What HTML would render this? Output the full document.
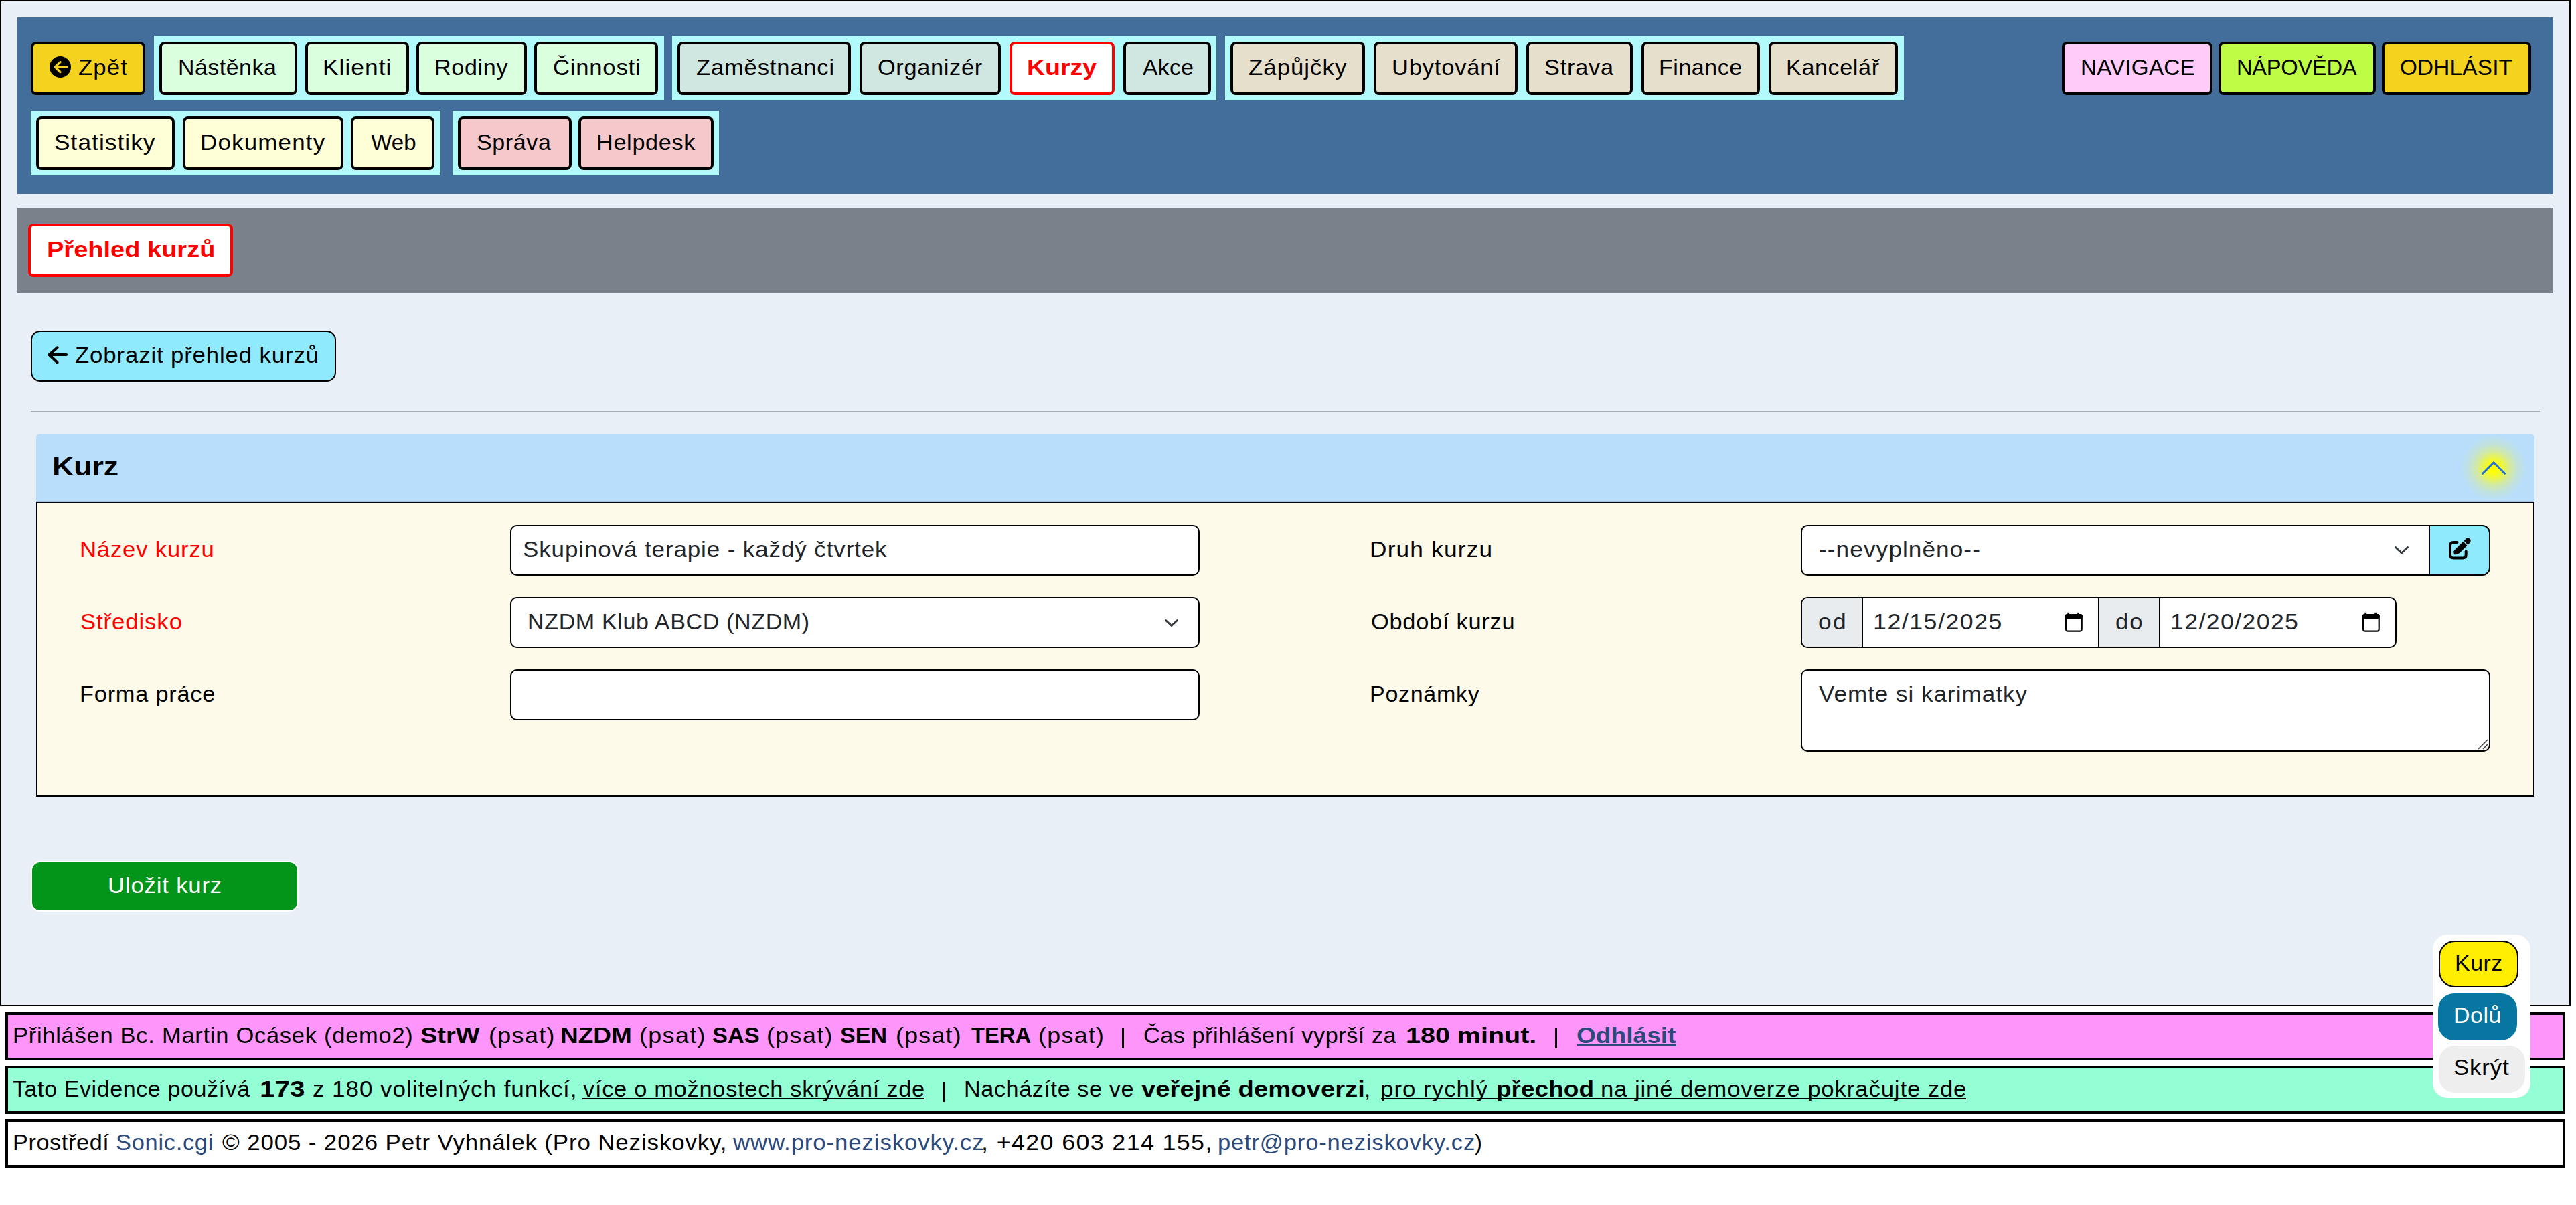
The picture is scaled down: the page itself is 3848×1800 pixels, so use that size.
<!DOCTYPE html>
<html><head><meta charset="utf-8"><title>Kurz</title>
<style>
html,body{margin:0;padding:0}
body{width:3848px;height:1800px;position:relative;overflow:hidden;background:#fff;font-family:"Liberation Sans",sans-serif}
.a{position:absolute;box-sizing:border-box}
.t{position:absolute;line-height:0;white-space:pre;font-family:"Liberation Sans",sans-serif}
@media (max-width:2600px){html{zoom:0.5}}
</style></head><body>
<div class="a" style="left:0px;top:0px;width:3840px;height:1503px;border:2px solid #000;background:#e8eff7"></div>
<div class="a" style="left:26px;top:26px;width:3788px;height:264px;background:#436e9b"></div>
<div class="a" style="left:230px;top:54px;width:762px;height:96px;background:#b2f9fc"></div>
<div class="a" style="left:1004px;top:54px;width:813px;height:96px;background:#b2f9fc"></div>
<div class="a" style="left:1830px;top:54px;width:1014px;height:96px;background:#b2f9fc"></div>
<div class="a" style="left:46px;top:166px;width:612px;height:96px;background:#b2f9fc"></div>
<div class="a" style="left:676px;top:166px;width:398px;height:96px;background:#b2f9fc"></div>
<div class="a" style="left:46px;top:62px;width:171px;height:80px;border:4px solid #000;border-radius:8px;background:#f4d31f"></div>
<div class="t" style="left:117.3px;top:101px;font-size:33px;letter-spacing:1.077px;color:#000;transform:scaleX(1.0523);transform-origin:0 0;">Zpět</div>
<div class="a" style="left:238px;top:62px;width:206px;height:80px;border:4px solid #000;border-radius:8px;background:#d9ffde"></div>
<div class="t" style="left:265.8px;top:101px;font-size:33px;letter-spacing:0.508px;color:#000;transform:scaleX(1.0266);transform-origin:0 0;">Nástěnka</div>
<div class="a" style="left:456px;top:62px;width:155px;height:80px;border:4px solid #000;border-radius:8px;background:#d9ffde"></div>
<div class="t" style="left:482.0px;top:101px;font-size:33px;letter-spacing:0.941px;color:#000;transform:scaleX(1.0712);transform-origin:0 0;">Klienti</div>
<div class="a" style="left:622px;top:62px;width:165px;height:80px;border:4px solid #000;border-radius:8px;background:#d9ffde"></div>
<div class="t" style="left:649.1px;top:101px;font-size:33px;letter-spacing:0.639px;color:#000;transform:scaleX(1.0333);transform-origin:0 0;">Rodiny</div>
<div class="a" style="left:798px;top:62px;width:185px;height:80px;border:4px solid #000;border-radius:8px;background:#d9ffde"></div>
<div class="t" style="left:825.9px;top:101px;font-size:33px;letter-spacing:0.763px;color:#000;transform:scaleX(1.0487);transform-origin:0 0;">Činnosti</div>
<div class="a" style="left:1012px;top:62px;width:259px;height:80px;border:4px solid #000;border-radius:8px;background:#cfe6e1"></div>
<div class="t" style="left:1039.5px;top:101px;font-size:33px;letter-spacing:0.817px;color:#000;transform:scaleX(1.0460);transform-origin:0 0;">Zaměstnanci</div>
<div class="a" style="left:1284px;top:62px;width:211px;height:80px;border:4px solid #000;border-radius:8px;background:#cfe6e1"></div>
<div class="t" style="left:1311.3px;top:101px;font-size:33px;letter-spacing:0.674px;color:#000;transform:scaleX(1.0389);transform-origin:0 0;">Organizér</div>
<div class="a" style="left:1508px;top:62px;width:157px;height:80px;border:4px solid #000;border-radius:8px;background:#ffffff;border-color:#ff0000"></div>
<div class="t" style="left:1534.3px;top:101px;font-size:33px;letter-spacing:-0.000px;color:#ff0000;font-weight:700;transform:scaleX(1.1348);transform-origin:0 0;">Kurzy</div>
<div class="a" style="left:1678px;top:62px;width:131px;height:80px;border:4px solid #000;border-radius:8px;background:#cfe6e1"></div>
<div class="t" style="left:1706.7px;top:101px;font-size:33px;letter-spacing:0.410px;color:#000;transform:scaleX(1.0174);transform-origin:0 0;">Akce</div>
<div class="a" style="left:1838px;top:62px;width:201px;height:80px;border:4px solid #000;border-radius:8px;background:#e6dfcb"></div>
<div class="t" style="left:1865.1px;top:101px;font-size:33px;letter-spacing:0.962px;color:#000;transform:scaleX(1.0542);transform-origin:0 0;">Zápůjčky</div>
<div class="a" style="left:2052px;top:62px;width:215px;height:80px;border:4px solid #000;border-radius:8px;background:#e6dfcb"></div>
<div class="t" style="left:2078.5px;top:101px;font-size:33px;letter-spacing:0.789px;color:#000;transform:scaleX(1.0452);transform-origin:0 0;">Ubytování</div>
<div class="a" style="left:2280px;top:62px;width:159px;height:80px;border:4px solid #000;border-radius:8px;background:#e6dfcb"></div>
<div class="t" style="left:2306.9px;top:101px;font-size:33px;letter-spacing:0.730px;color:#000;transform:scaleX(1.0404);transform-origin:0 0;">Strava</div>
<div class="a" style="left:2452px;top:62px;width:177px;height:80px;border:4px solid #000;border-radius:8px;background:#e6dfcb"></div>
<div class="t" style="left:2477.9px;top:101px;font-size:33px;letter-spacing:0.542px;color:#000;transform:scaleX(1.0296);transform-origin:0 0;">Finance</div>
<div class="a" style="left:2642px;top:62px;width:193px;height:80px;border:4px solid #000;border-radius:8px;background:#e6dfcb"></div>
<div class="t" style="left:2668.0px;top:101px;font-size:33px;letter-spacing:0.601px;color:#000;transform:scaleX(1.0340);transform-origin:0 0;">Kancelář</div>
<div class="a" style="left:3080px;top:62px;width:225px;height:80px;border:4px solid #000;border-radius:8px;background:#ffcbf9"></div>
<div class="t" style="left:3108.2px;top:101px;font-size:33px;letter-spacing:0.177px;color:#000;transform:scaleX(1.0076);transform-origin:0 0;">NAVIGACE</div>
<div class="a" style="left:3314px;top:62px;width:235px;height:80px;border:4px solid #000;border-radius:8px;background:#befc45"></div>
<div class="t" style="left:3341.1px;top:101px;font-size:33px;letter-spacing:-0.267px;color:#000;transform:scaleX(0.9897);transform-origin:0 0;">NÁPOVĚDA</div>
<div class="a" style="left:3558px;top:62px;width:223px;height:80px;border:4px solid #000;border-radius:8px;background:#f4d31f"></div>
<div class="t" style="left:3585.4px;top:101px;font-size:33px;letter-spacing:0.205px;color:#000;transform:scaleX(1.0088);transform-origin:0 0;">ODHLÁSIT</div>
<div class="a" style="left:54px;top:174px;width:207px;height:80px;border:4px solid #000;border-radius:8px;background:#ffffd7"></div>
<div class="t" style="left:81.4px;top:213px;font-size:33px;letter-spacing:0.950px;color:#000;transform:scaleX(1.0704);transform-origin:0 0;">Statistiky</div>
<div class="a" style="left:273px;top:174px;width:240px;height:80px;border:4px solid #000;border-radius:8px;background:#ffffd7"></div>
<div class="t" style="left:298.8px;top:213px;font-size:33px;letter-spacing:1.122px;color:#000;transform:scaleX(1.0583);transform-origin:0 0;">Dokumenty</div>
<div class="a" style="left:524px;top:174px;width:125px;height:80px;border:4px solid #000;border-radius:8px;background:#ffffd7"></div>
<div class="t" style="left:554.3px;top:213px;font-size:33px;letter-spacing:0.000px;color:#000;">Web</div>
<div class="a" style="left:684px;top:174px;width:170px;height:80px;border:4px solid #000;border-radius:8px;background:#f5c9cb"></div>
<div class="t" style="left:712.0px;top:213px;font-size:33px;letter-spacing:0.611px;color:#000;transform:scaleX(1.0306);transform-origin:0 0;">Správa</div>
<div class="a" style="left:864px;top:174px;width:202px;height:80px;border:4px solid #000;border-radius:8px;background:#f5c9cb"></div>
<div class="t" style="left:891.4px;top:213px;font-size:33px;letter-spacing:0.669px;color:#000;transform:scaleX(1.0362);transform-origin:0 0;">Helpdesk</div>
<svg class="a" style="left:72px;top:82px" width="36" height="36" viewBox="0 0 36 36"><circle cx="18" cy="18" r="16" fill="#000"/><path d="M18 10.6 L10.4 18 L18 25.6 M10.6 18 H27.6" stroke="#f4d31f" stroke-width="3.4" fill="none" stroke-linecap="round" stroke-linejoin="round"/></svg>
<div class="a" style="left:26px;top:310px;width:3788px;height:128px;background:#7b818b"></div>
<div class="a" style="left:42px;top:334px;width:306px;height:80px;background:#fff;border:4px solid #ff0000;border-radius:8px"></div>
<div class="t" style="left:70.2px;top:373px;font-size:33px;letter-spacing:0.000px;color:#ff0000;font-weight:700;transform:scaleX(1.1519);transform-origin:0 0;">Přehled kurzů</div>
<div class="a" style="left:46px;top:494px;width:456px;height:76px;background:#8feafd;border:2px solid #000;border-radius:14px"></div>
<svg class="a" style="left:68px;top:514px" width="36" height="32" viewBox="0 0 36 32"><path d="M17.5 5.5 L5.5 16 L17.5 27.5 M6 16 H31" stroke="#000" stroke-width="4.2" fill="none" stroke-linecap="round" stroke-linejoin="round"/></svg>
<div class="t" style="left:111.9px;top:531px;font-size:33px;letter-spacing:0.801px;color:#000;transform:scaleX(1.0546);transform-origin:0 0;">Zobrazit přehled kurzů</div>
<div class="a" style="left:46px;top:614px;width:3748px;height:2px;background:#a7adb5"></div>
<div class="a" style="left:54px;top:648px;width:3732px;height:104px;background:#b9defc;border-radius:6px 6px 0 0"></div>
<div class="a" style="left:54px;top:748px;width:3732px;height:2px;background:#a3c4e4"></div>
<div class="a" style="left:54px;top:750px;width:3732px;height:440px;background:#fefae9;border:2px solid #000"></div>
<div class="t" style="left:77.7px;top:697px;font-size:39px;letter-spacing:0.000px;color:#000;font-weight:700;transform:scaleX(1.1422);transform-origin:0 0;">Kurz</div>
<div class="a" style="left:3665px;top:639px;width:120px;height:120px;background:radial-gradient(circle at 60px 60px, rgba(255,255,0,1) 0px, rgba(255,255,0,1) 6px, rgba(255,255,0,0.72) 15px, rgba(255,255,0,0.36) 25px, rgba(255,255,0,0.12) 37px, rgba(255,255,0,0) 50px)"></div>
<svg class="a" style="left:3700px;top:680px" width="50" height="36" viewBox="0 0 50 36"><path d="M8.6 27.3 L25.1 10.75 L41.7 27.3" stroke="#1a6fe0" stroke-width="3" fill="none" stroke-linecap="round" stroke-linejoin="miter"/></svg>
<div class="t" style="left:118.7px;top:821px;font-size:33px;letter-spacing:0.820px;color:#ff0000;transform:scaleX(1.0483);transform-origin:0 0;">Název kurzu</div>
<div class="t" style="left:119.7px;top:929px;font-size:33px;letter-spacing:0.843px;color:#ff0000;transform:scaleX(1.0530);transform-origin:0 0;">Středisko</div>
<div class="t" style="left:118.7px;top:1037px;font-size:33px;letter-spacing:0.730px;color:#000;transform:scaleX(1.0415);transform-origin:0 0;">Forma práce</div>
<div class="t" style="left:2046.2px;top:821px;font-size:33px;letter-spacing:1.108px;color:#000;transform:scaleX(1.0683);transform-origin:0 0;">Druh kurzu</div>
<div class="t" style="left:2048.4px;top:929px;font-size:33px;letter-spacing:0.711px;color:#000;transform:scaleX(1.0418);transform-origin:0 0;">Období kurzu</div>
<div class="t" style="left:2046.3px;top:1037px;font-size:33px;letter-spacing:0.665px;color:#000;transform:scaleX(1.0318);transform-origin:0 0;">Poznámky</div>
<div class="a" style="left:762px;top:784px;width:1030px;height:76px;background:#fff;border:2px solid #000;border-radius:10px"></div>
<div class="t" style="left:780.5px;top:821px;font-size:33px;letter-spacing:0.847px;color:#212529;transform:scaleX(1.0593);transform-origin:0 0;">Skupinová terapie - každý čtvrtek</div>
<div class="a" style="left:762px;top:892px;width:1030px;height:76px;background:#fff;border:2px solid #000;border-radius:10px"></div>
<div class="t" style="left:787.6px;top:929px;font-size:33px;letter-spacing:0.606px;color:#212529;transform:scaleX(1.0320);transform-origin:0 0;">NZDM Klub ABCD (NZDM)</div>
<svg class="a" style="left:1736px;top:920px" width="28" height="20" viewBox="0 0 28 20"><path d="M5.5 6.5 L14 14.5 L22.5 6.5" stroke="#343a40" stroke-width="3" fill="none" stroke-linecap="round" stroke-linejoin="round"/></svg>
<div class="a" style="left:762px;top:1000px;width:1030px;height:76px;background:#fff;border:2px solid #000;border-radius:10px"></div>
<div class="a" style="left:2690px;top:784px;width:941px;height:76px;background:#fff;border:2px solid #000;border-right:none;border-radius:10px 0 0 10px"></div>
<div class="t" style="left:2716.9px;top:821px;font-size:33px;letter-spacing:1.010px;color:#212529;transform:scaleX(1.0664);transform-origin:0 0;">--nevyplněno--</div>
<svg class="a" style="left:3573px;top:811px" width="28" height="20" viewBox="0 0 28 20"><path d="M5.5 6.5 L14.5 15 L23.5 6.5" stroke="#343a40" stroke-width="3" fill="none" stroke-linecap="round" stroke-linejoin="round"/></svg>
<div class="a" style="left:3628px;top:784px;width:92px;height:76px;background:#8feafd;border:2px solid #000;border-radius:0 12px 12px 0"></div>
<svg class="a" style="left:3650px;top:798px" width="48" height="46" viewBox="0 0 48 46"><path d="M20.5 12 H15 Q10 12 10 17 V30.6 Q10 35.6 15 35.6 H28.7 Q33.7 35.6 33.7 30.6 V25.5" stroke="#000" stroke-width="4" fill="none" stroke-linecap="round"/><g transform="translate(16 30.2) rotate(-45)"><path d="M0 0 L2.2 -3.4 Q3.2 -4.2 5.5 -4.2 H23.3 V4.2 H8 Q3.5 4.2 0 0 Z" fill="#000"/><path d="M24.8 -4.2 H29 A4.2 4.2 0 0 1 29 4.2 H24.8 Z" fill="#000"/></g></svg>
<div class="a" style="left:2690px;top:892px;width:890px;height:76px;background:#fff;border:2px solid #000;border-radius:10px"></div>
<div class="a" style="left:2692px;top:894px;width:89px;height:72px;background:#e9ecef;border-radius:8px 0 0 8px"></div>
<div class="a" style="left:2781px;top:894px;width:2px;height:72px;background:#000"></div>
<div class="a" style="left:3134px;top:894px;width:2px;height:72px;background:#000"></div>
<div class="a" style="left:3136px;top:894px;width:89px;height:72px;background:#e9ecef"></div>
<div class="a" style="left:3225px;top:894px;width:2px;height:72px;background:#000"></div>
<div class="t" style="left:2715.6px;top:929px;font-size:33px;letter-spacing:2.237px;color:#212529;transform:scaleX(1.0727);transform-origin:0 0;">od</div>
<div class="t" style="left:2797.8px;top:929px;font-size:33px;letter-spacing:1.385px;color:#212529;transform:scaleX(1.0833);transform-origin:0 0;">12/15/2025</div>
<div class="t" style="left:3159.5px;top:929px;font-size:33px;letter-spacing:1.799px;color:#212529;transform:scaleX(1.0559);transform-origin:0 0;">do</div>
<div class="t" style="left:3241.6px;top:929px;font-size:33px;letter-spacing:1.313px;color:#212529;transform:scaleX(1.0787);transform-origin:0 0;">12/20/2025</div>
<svg class="a" style="left:3085px;top:914px" width="26" height="30" viewBox="0 0 26 30"><rect x="1.1" y="4.1" width="23.6" height="24.6" rx="3" stroke="#000" stroke-width="2.2" fill="none"/><rect x="0" y="3" width="25.8" height="7" rx="3" fill="#000"/><rect x="3.3" y="0.8" width="2.8" height="4" fill="#000"/><rect x="18.2" y="0.8" width="2.8" height="4" fill="#000"/></svg>
<svg class="a" style="left:3529px;top:914px" width="26" height="30" viewBox="0 0 26 30"><rect x="1.1" y="4.1" width="23.6" height="24.6" rx="3" stroke="#000" stroke-width="2.2" fill="none"/><rect x="0" y="3" width="25.8" height="7" rx="3" fill="#000"/><rect x="3.3" y="0.8" width="2.8" height="4" fill="#000"/><rect x="18.2" y="0.8" width="2.8" height="4" fill="#000"/></svg>
<div class="a" style="left:2690px;top:1000px;width:1030px;height:123px;background:#fff;border:2px solid #000;border-radius:10px"></div>
<div class="t" style="left:2716.7px;top:1037px;font-size:33px;letter-spacing:0.942px;color:#212529;transform:scaleX(1.0616);transform-origin:0 0;">Vemte si karimatky</div>
<svg class="a" style="left:3700px;top:1103px" width="18" height="18" viewBox="0 0 18 18"><path d="M2 16 L16 2 M9 16 L16 9" stroke="#444" stroke-width="1.6"/></svg>
<div class="a" style="left:46px;top:1286px;width:400px;height:76px;background:#03951a;border:2px solid #fff;border-radius:14px"></div>
<div class="t" style="left:160.9px;top:1323px;font-size:33px;letter-spacing:0.760px;color:#fff;transform:scaleX(1.0530);transform-origin:0 0;">Uložit kurz</div>
<div class="a" style="left:8px;top:1512px;width:3824px;height:72px;background:#fd95fb;border:4px solid #000"></div>
<div class="a" style="left:8px;top:1592px;width:3824px;height:72px;background:#94ffd5;border:4px solid #000"></div>
<div class="a" style="left:8px;top:1672px;width:3824px;height:72px;background:#fff;border:4px solid #000"></div>
<div class="t" style="left:19.4px;top:1547px;font-size:33px;letter-spacing:0.692px;color:#000;transform:scaleX(1.0453);transform-origin:0 0;">Přihlášen Bc. Martin Ocásek (demo2)</div>
<div class="t" style="left:628.1px;top:1547px;font-size:33px;letter-spacing:0.000px;color:#000;font-weight:700;transform:scaleX(1.1513);transform-origin:0 0;">StrW</div>
<div class="t" style="left:729.6px;top:1547px;font-size:33px;letter-spacing:1.262px;color:#000;transform:scaleX(1.0856);transform-origin:0 0;">(psat)</div>
<div class="t" style="left:836.8px;top:1547px;font-size:33px;letter-spacing:0.000px;color:#000;font-weight:700;transform:scaleX(1.1209);transform-origin:0 0;">NZDM</div>
<div class="t" style="left:955.1px;top:1547px;font-size:33px;letter-spacing:1.262px;color:#000;transform:scaleX(1.0856);transform-origin:0 0;">(psat)</div>
<div class="t" style="left:1064.2px;top:1547px;font-size:33px;letter-spacing:0.000px;color:#000;font-weight:700;transform:scaleX(1.0424);transform-origin:0 0;">SAS</div>
<div class="t" style="left:1145.4px;top:1547px;font-size:33px;letter-spacing:1.262px;color:#000;transform:scaleX(1.0856);transform-origin:0 0;">(psat)</div>
<div class="t" style="left:1254.8px;top:1547px;font-size:33px;letter-spacing:0.000px;color:#000;font-weight:700;transform:scaleX(1.0323);transform-origin:0 0;">SEN</div>
<div class="t" style="left:1337.8px;top:1547px;font-size:33px;letter-spacing:1.202px;color:#000;transform:scaleX(1.0813);transform-origin:0 0;">(psat)</div>
<div class="t" style="left:1450.6px;top:1547px;font-size:33px;letter-spacing:0.000px;color:#000;font-weight:700;transform:scaleX(0.9921);transform-origin:0 0;">TERA</div>
<div class="t" style="left:1550.8px;top:1547px;font-size:33px;letter-spacing:1.228px;color:#000;transform:scaleX(1.0831);transform-origin:0 0;">(psat)</div>
<div class="t" style="left:1707.5px;top:1547px;font-size:33px;letter-spacing:0.533px;color:#000;transform:scaleX(1.0362);transform-origin:0 0;">Čas přihlášení vyprší za</div>
<div class="t" style="left:2100.0px;top:1547px;font-size:33px;letter-spacing:0.000px;color:#000;font-weight:700;transform:scaleX(1.1969);transform-origin:0 0;">180 minut.</div>
<div class="a" style="left:1676px;top:1536px;width:3px;height:30px;background:#000"></div>
<div class="a" style="left:2323px;top:1536px;width:3px;height:30px;background:#000"></div>
<div class="t" style="left:2354.9px;top:1547px;font-size:33px;letter-spacing:0.000px;color:#2c4a7c;font-weight:700;transform:scaleX(1.1244);transform-origin:0 0;">Odhlásit</div>
<div class="a" style="left:2356px;top:1560px;width:148px;height:3px;background:#2c4a7c"></div>
<div class="t" style="left:19.4px;top:1627px;font-size:33px;letter-spacing:0.535px;color:#000;transform:scaleX(1.0333);transform-origin:0 0;">Tato Evidence používá</div>
<div class="t" style="left:387.5px;top:1627px;font-size:33px;letter-spacing:-0.000px;color:#000;font-weight:700;transform:scaleX(1.2269);transform-origin:0 0;">173</div>
<div class="t" style="left:466.9px;top:1627px;font-size:33px;letter-spacing:0.860px;color:#000;transform:scaleX(1.0634);transform-origin:0 0;">z 180 volitelných funkcí,</div>
<div class="t" style="left:871.0px;top:1627px;font-size:33px;letter-spacing:0.671px;color:#000;transform:scaleX(1.0434);transform-origin:0 0;">více o možnostech skrývání zde</div>
<div class="t" style="left:1439.6px;top:1627px;font-size:33px;letter-spacing:0.572px;color:#000;transform:scaleX(1.0358);transform-origin:0 0;">Nacházíte se ve</div>
<div class="t" style="left:1704.9px;top:1627px;font-size:33px;letter-spacing:0.000px;color:#000;font-weight:700;transform:scaleX(1.1591);transform-origin:0 0;">veřejné demoverzi</div>
<div class="t" style="left:2061.5px;top:1627px;font-size:33px;letter-spacing:0.896px;color:#000;transform:scaleX(1.0606);transform-origin:0 0;">pro rychlý</div>
<div class="t" style="left:2234.5px;top:1627px;font-size:33px;letter-spacing:0.000px;color:#000;font-weight:700;transform:scaleX(1.1214);transform-origin:0 0;">přechod</div>
<div class="t" style="left:2390.9px;top:1627px;font-size:33px;letter-spacing:0.808px;color:#000;transform:scaleX(1.0539);transform-origin:0 0;">na jiné demoverze pokračujte zde</div>
<div class="t" style="left:2038px;top:1627px;font-size:33px">,</div>
<div class="a" style="left:1408px;top:1616px;width:3px;height:30px;background:#000"></div>
<div class="a" style="left:870px;top:1640px;width:511px;height:2px;background:#000"></div>
<div class="a" style="left:2063px;top:1640px;width:874px;height:2px;background:#000"></div>
<div class="t" style="left:18.6px;top:1707px;font-size:33px;letter-spacing:0.590px;color:#000;transform:scaleX(1.0374);transform-origin:0 0;">Prostředí</div>
<div class="t" style="left:173.2px;top:1707px;font-size:33px;letter-spacing:0.677px;color:#2c4a7c;transform:scaleX(1.0435);transform-origin:0 0;">Sonic.cgi</div>
<div class="t" style="left:331.5px;top:1707px;font-size:33px;letter-spacing:0.837px;color:#000;transform:scaleX(1.0564);transform-origin:0 0;">© 2005 - 2026 Petr Vyhnálek (Pro Neziskovky,</div>
<div class="t" style="left:1095.1px;top:1707px;font-size:33px;letter-spacing:0.852px;color:#2c4a7c;transform:scaleX(1.0533);transform-origin:0 0;">www.pro-neziskovky.cz</div>
<div class="t" style="left:1465.7px;top:1707px;font-size:33px;letter-spacing:1.261px;color:#000;transform:scaleX(1.0856);transform-origin:0 0;">, +420 603 214 155,</div>
<div class="t" style="left:1818.6px;top:1707px;font-size:33px;letter-spacing:0.770px;color:#2c4a7c;transform:scaleX(1.0488);transform-origin:0 0;">petr@pro-neziskovky.cz</div>
<div class="t" style="left:2203px;top:1707px;font-size:33px">)</div>
<div class="a" style="left:3634px;top:1396px;width:146px;height:244px;background:#fff;border-radius:22px"></div>
<div class="a" style="left:3643px;top:1405px;width:119px;height:70px;background:#ffee00;border:2px solid #000;border-radius:24px"></div>
<div class="t" style="left:3666.9px;top:1439px;font-size:33px;letter-spacing:0.536px;color:#000;transform:scaleX(1.0262);transform-origin:0 0;">Kurz</div>
<div class="a" style="left:3642px;top:1484px;width:118px;height:70px;background:#0776a0;border-radius:24px"></div>
<div class="t" style="left:3664.7px;top:1517px;font-size:33px;letter-spacing:0.536px;color:#fff;transform:scaleX(1.0262);transform-origin:0 0;">Dolů</div>
<div class="a" style="left:3643px;top:1562px;width:129px;height:70px;background:#eeeeee;border-radius:24px"></div>
<div class="t" style="left:3665.1px;top:1595px;font-size:33px;letter-spacing:0.892px;color:#000;transform:scaleX(1.0514);transform-origin:0 0;">Skrýt</div>
</body></html>
